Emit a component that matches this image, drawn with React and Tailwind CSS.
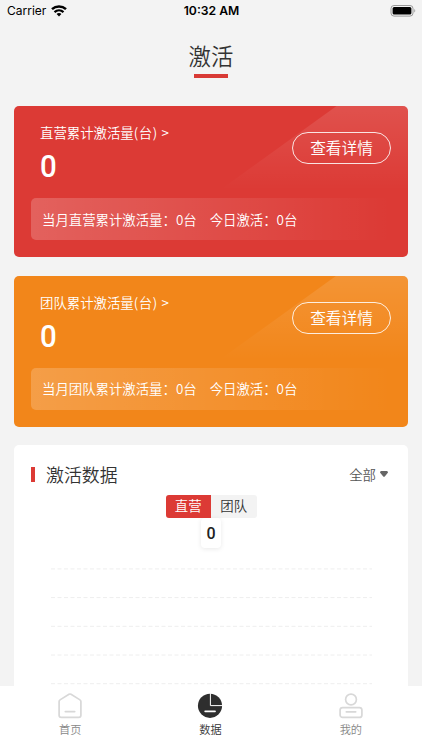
import React, { useState } from "react";
import { clsx } from "clsx";

const SUMMARY = [
  { id: "direct", name: "直营", total: 0, month: 0, today: 0, bg: "bg-[#dc3a35]" },
  { id: "team", name: "团队", total: 0, month: 0, today: 0, bg: "bg-[#f2861a]" },
];

const GRID_LINES = [0, 1, 2, 3, 4];

function StatusBar() {
  return (
    <div className="grid h-[22px] shrink-0 grid-cols-3 items-center pl-[7px] pr-1.5 font-['Inter',sans-serif] text-black">
      <div className="flex items-center gap-[5px]">
        <span className="text-[12px] leading-4">Carrier</span>
        <svg width="16" height="12" viewBox="0 0 16 12" fill="none" stroke="currentColor">
          <path d="M1 4.2C5 .5 11 .5 15 4.2" strokeWidth="2.5" />
          <path d="M3.5 7.1c2.6-2.4 6.4-2.4 9 0" strokeWidth="2.2" />
          <path d="M8 11.4 5.6 9c1.3-1.2 3.5-1.2 4.8 0z" fill="currentColor" stroke="none" />
        </svg>
      </div>
      <span className="text-center text-[12.2px] leading-4 font-semibold">10:32 AM</span>
      <svg className="justify-self-end" width="26" height="12" viewBox="0 0 26 12">
        <rect x="1" y=".5" width="22" height="10.6" rx="3" fill="none" stroke="#999" />
        <rect x="2.6" y="2.1" width="18.8" height="7.4" rx="1.5" fill="#000" />
        <path d="M24.3 4v3.6c1.3-.6 1.3-3 0-3.6z" fill="#999" />
      </svg>
    </div>
  );
}

function SummaryCard({ item }) {
  return (
    <section className={clsx("relative h-[151px] overflow-hidden rounded-[5px] text-white", item.bg)}>
      <div className="absolute top-0 right-0 h-[84px] w-[188px] bg-linear-to-b from-white/12 to-white/0 [clip-path:polygon(62%_0,100%_0,100%_100%,0_100%)]" />
      <div className="relative flex justify-between pl-[26px] pr-[17px] pt-[16px]">
        <div>
          <div className="text-[13.4px] leading-5 font-[350]">
            {item.name}累计激活量<span className="tracking-[0.6px]">(台) &gt;</span>
          </div>
          <div className="mt-[6px] w-fit origin-left scale-x-92 font-['Roboto',sans-serif] text-[32px] leading-9 font-medium">
            {item.total}
          </div>
        </div>
        <button className="mt-[10px] h-8 w-[99px] rounded-full border-[1.5px] border-white/85 pb-px text-[15.7px] leading-[25px] font-[350]">
          查看详情
        </button>
      </div>
      <div className="relative mx-[17px] mt-[14px] flex h-[42px] items-center gap-[13px] rounded-[5px] bg-linear-to-r from-white/20 to-white/0 pl-[11px] text-[13.4px] font-[350]">
        <span>当月{item.name}累计激活量：{item.month}台</span>
        <span>今日激活：{item.today}台</span>
      </div>
    </section>
  );
}

function DataPanel() {
  const [active, setActive] = useState("direct");

  return (
    <section className="min-h-0 flex-1 rounded-t-[5px] bg-white">
      <div className="flex items-center justify-between pt-[17px] pr-[20px] pl-[17px]">
        <div className="flex items-center gap-[11px]">
          <span className="mt-px h-[15px] w-[4px] bg-[#dc3a35]" />
          <h2 className="text-[17.9px] leading-6 font-[350] text-[#333]">激活数据</h2>
        </div>
        <button className="flex items-center gap-[4px] text-[13.4px] leading-6 font-[350] text-[#555]">
          全部
          <svg width="8" height="6" viewBox="0 0 8 6" fill="#666">
            <path d="M1.2 0h5.6Q8 .2 8 1.6L4.8 5.4Q4 6 3.2 5.4L0 1.6Q0 .2 1.2 0z" />
          </svg>
        </button>
      </div>
      <div className="mx-auto mt-[9px] flex h-[23px] w-[91px] overflow-hidden rounded-[3px] bg-[#f3f3f3]">
        {SUMMARY.map((item) => (
          <button
            key={item.id}
            onClick={() => setActive(item.id)}
            className={clsx(
              "flex-1 pb-[2px] text-[13.4px] leading-[19px] font-[350]",
              active === item.id ? "bg-[#dc3a35] text-white" : "text-[#333]"
            )}
          >
            {item.name}
          </button>
        ))}
      </div>
      <div className="mx-auto flex h-[30px] w-5 items-center justify-center rounded-[4px] bg-white pt-px font-['Roboto',sans-serif] text-[16px] font-medium text-[#222] shadow-[0_1px_5px_rgba(0,0,0,0.09)]">
        0
      </div>
      <svg className="mt-[20px] ml-[37px]" width="321" height="117" stroke="#eee" strokeDasharray="4 2.5">
        {GRID_LINES.map((n) => (
          <line key={n} x1="0" x2="321" y1={0.9 + n * 28.7} y2={0.9 + n * 28.7} />
        ))}
      </svg>
    </section>
  );
}

function HomeIcon() {
  return (
    <svg width="26" height="26" viewBox="0 0 26 26" fill="none" stroke="#d8d8d8" strokeWidth="1.7" strokeLinecap="round" strokeLinejoin="round">
      <path d="M2.1 8.4Q2.1 7.4 3 6.9L12 1.3Q13 .7 14 1.3L23 6.9Q23.9 7.4 23.9 8.4V22.2Q23.9 24.4 21.7 24.4H4.3Q2.1 24.4 2.1 22.2z" />
      <path d="M8.3 18.6h9.4" />
    </svg>
  );
}

function ChartIcon() {
  return (
    <svg width="26" height="26" viewBox="0 0 26 26">
      <circle cx="13" cy="12.8" r="12.1" fill="#2e2e2e" />
      <path d="M13.4.2v12.4h12.4" fill="none" stroke="#fff" strokeWidth="1" />
      <path d="M8.2 18.3h9.8" fill="none" stroke="#fff" strokeWidth="1.8" strokeLinecap="round" />
    </svg>
  );
}

function UserIcon() {
  return (
    <svg width="26" height="26" viewBox="0 0 26 26" fill="none" stroke="#d8d8d8" strokeWidth="1.7" strokeLinecap="round">
      <circle cx="13" cy="6.5" r="5.4" />
      <rect x="2.1" y="14.6" width="21.8" height="9.8" rx="2.5" />
      <path d="M8.3 18.8h9.4" />
    </svg>
  );
}

const TABS = [
  { label: "首页", Icon: HomeIcon },
  { label: "数据", Icon: ChartIcon, current: true },
  { label: "我的", Icon: UserIcon },
];

export default function App() {
  return (
    <div className="flex h-[750px] w-[422px] flex-col overflow-hidden bg-[#f3f3f3] font-['Noto_Sans_CJK_SC',sans-serif]">
      <StatusBar />
      <header className="flex h-[84px] shrink-0 flex-col items-center pt-[17px]">
        <h1 className="text-[22.4px] leading-8 font-[350] text-[#333]">激活</h1>
        <span className="mt-[3px] h-[4px] w-[34px] bg-[#d83a35]" />
      </header>
      <main className="flex min-h-0 flex-1 flex-col gap-[18.5px] overflow-hidden px-[14px]">
        {SUMMARY.map((item) => (
          <div key={item.id} className="shrink-0">
            <SummaryCard item={item} />
          </div>
        ))}
        <DataPanel />
      </main>
      <nav className="grid h-16 shrink-0 grid-cols-3 bg-white pr-px">
        {TABS.map(({ label, Icon, current }) => (
          <a
            key={label}
            className={clsx(
              "flex flex-col items-center gap-[2px] pt-[7px] text-[11.2px] leading-[17px] font-[350]",
              current ? "text-[#333]" : "text-[#888]"
            )}
          >
            <Icon />
            {label}
          </a>
        ))}
      </nav>
    </div>
  );
}
